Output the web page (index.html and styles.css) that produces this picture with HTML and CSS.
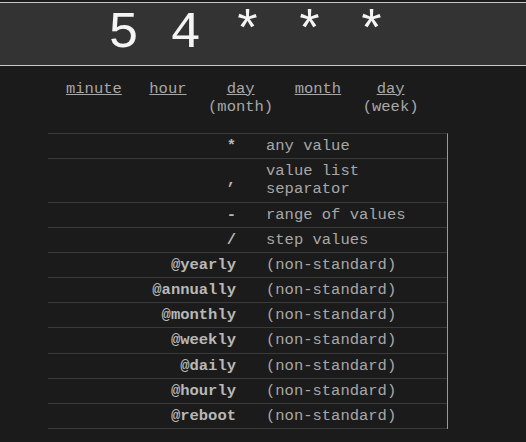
FILE: index.html
```html
<!DOCTYPE html>
<html>
<head>
<meta charset="utf-8">
<title>cron</title>
<link rel="stylesheet" href="styles.css">
</head>
<body>
<div class="expr"><span class="expr-text">5 4 * * *</span></div>
<div class="parts">
  <div class="part"><span class="lbl">minute</span></div>
  <div class="part part-hour"><span class="lbl">hour</span></div>
  <div class="part"><span class="lbl">day</span><span class="sub">(month)</span></div>
  <div class="part"><span class="lbl">month</span></div>
  <div class="part"><span class="lbl">day</span><span class="sub">(week)</span></div>
</div>
<table class="ref">
  <colgroup><col class="c1"><col class="c2"></colgroup>
  <tbody>
    <tr><th>*</th><td>any value</td></tr>
    <tr><th>,</th><td>value list separator</td></tr>
    <tr><th>-</th><td>range of values</td></tr>
    <tr><th>/</th><td>step values</td></tr>
    <tr><th>@yearly</th><td>(non-standard)</td></tr>
    <tr><th>@annually</th><td>(non-standard)</td></tr>
    <tr><th>@monthly</th><td>(non-standard)</td></tr>
    <tr><th>@weekly</th><td>(non-standard)</td></tr>
    <tr><th>@daily</th><td>(non-standard)</td></tr>
    <tr><th>@hourly</th><td>(non-standard)</td></tr>
    <tr><th>@reboot</th><td>(non-standard)</td></tr>
  </tbody>
</table>
</body>
</html>
```
FILE: styles.css
```css
html, body {
  margin: 0;
  padding: 0;
  background: #1b1b1b;
}
body {
  font-family: "Liberation Mono", "Courier New", monospace;
  font-size: 15.5px;
  color: #a8a8a8;
}
.expr {
  margin-top: 2px;
  border-top: 1px solid #c8c8c8;
  border-bottom: 1px solid #c8c8c8;
  background: #333333;
  height: 62px;
  display: flex;
  justify-content: center;
}
.expr-text {
  font-size: 51.67px;
  line-height: 62px;
  color: #f4f4f4;
  padding-right: 31px;
  white-space: pre;
}
.parts {
  display: flex;
  align-items: flex-start;
  padding-left: 66px;
  margin-top: 13.5px;
  line-height: 18px;
}
.part {
  display: flex;
  flex-direction: column;
  align-items: center;
  margin-right: 21.5px;
}
.part-hour {
  margin-left: 6px;
}
.lbl {
  text-decoration: underline;
}
.ref {
  margin-top: 17.5px;
  margin-left: 48px;
  width: 400px;
  table-layout: fixed;
  border-collapse: separate;
  border-spacing: 0;
  border-top: 1px solid #3a3a3a;
  border-right: 1px solid #9a9a9a;
  line-height: 18.17px;
}
.c1 { width: 203px; }
.c2 { width: 196px; }
.ref th, .ref td {
  border-bottom: 1px solid #3a3a3a;
  vertical-align: middle;
  padding-top: 3px;
  padding-bottom: 3px;
}
.ref th {
  text-align: right;
  font-weight: bold;
  color: #b8b8b8;
  padding-right: 15px;
  padding-left: 0;
}
.ref td {
  text-align: left;
  color: #a8a8a8;
  padding-left: 15px;
  padding-right: 0;
}
```
